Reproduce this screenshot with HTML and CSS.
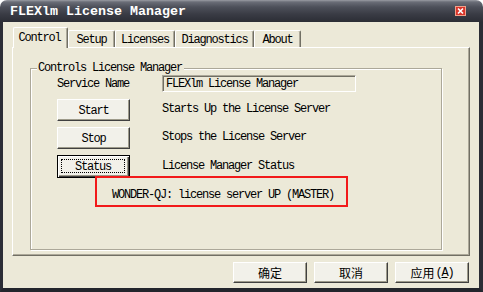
FILE: index.html
```html
<!DOCTYPE html>
<html>
<head>
<meta charset="utf-8">
<link rel="stylesheet" href="styles.css">
</head>
<body>
<div class="window">
  <div class="titlebar">
    <span class="title">FLEXlm License Manager</span>
    <span class="close">
      <svg width="11" height="10" viewBox="0 0 11 10">
        <rect x="0.5" y="0.5" width="10" height="9" fill="#d8342a" stroke="#f2a08a"/>
        <path d="M3 2.5 L8 7.5 M8 2.5 L3 7.5" stroke="#fff" stroke-width="1.6"/>
      </svg>
    </span>
  </div>
  <div class="frame">
    <div class="tabs">
      <div class="tab active t-control">Control</div>
      <div class="tab t-setup">Setup</div>
      <div class="tab t-lic">Licenses</div>
      <div class="tab t-diag">Diagnostics</div>
      <div class="tab t-about">About</div>
    </div>
    <div class="panel">
      <div class="group">
        <span class="group-label">Controls License Manager</span>
        <div class="row row-svc">
          <span class="lbl">Service Name</span>
          <div class="field">FLEXlm License Manager</div>
        </div>
        <div class="row row-btn row-start">
          <div class="btn">Start</div>
          <span class="desc">Starts Up the License Server</span>
        </div>
        <div class="row row-btn row-stop">
          <div class="btn">Stop</div>
          <span class="desc">Stops the License Server</span>
        </div>
        <div class="row row-btn row-status">
          <div class="btn btn-default"><span class="focus">Status</span></div>
          <span class="desc">License Manager Status</span>
        </div>
        <div class="status-text">WONDER-QJ: license server UP (MASTER)</div>
        <div class="redbox"></div>
      </div>
    </div>
    <div class="actions">
      <div class="btn btn-cn">确定</div>
      <div class="btn btn-cn">取消</div>
      <div class="btn btn-cn">应用<span class="acc">(<u>A</u>)</span></div>
    </div>
  </div>
</div>
</body>
</html>
```
FILE: styles.css
```css
html, body {
  margin: 0;
  padding: 0;
  background: #ffffff;
}
.window {
  width: 483px;
  height: 292px;
  font-family: "Liberation Mono", "DejaVu Sans Mono", monospace;
  font-size: 12px;
  letter-spacing: -1.2px;
  color: #000;
}
.titlebar {
  height: 22px;
  box-sizing: border-box;
  border-radius: 7px 7px 0 0;
  background: linear-gradient(#9a9ca4 0px, #6a6d77 2px, #4d505a 7px, #3a3c45 14px, #2b2d35 22px);
  display: flex;
  align-items: center;
  padding: 0 0 0 10px;
}
.title {
  color: #fff;
  font-weight: bold;
  font-size: 13.33px;
  letter-spacing: 0;
  flex: 1;
  padding-top: 1px;
}
.close {
  width: 11px;
  height: 10px;
  margin-right: 17px;
  display: flex;
}
.frame {
  height: 270px;
  box-sizing: border-box;
  background: #ece9d8;
  border-left: 3px solid #2b2d35;
  border-right: 4px solid #2b2d35;
  border-bottom: 4px solid #23252c;
  display: flex;
  flex-direction: column;
}
.tabs {
  display: flex;
  align-items: flex-start;
  height: 20px;
  padding: 5px 0 0 10px;
  position: relative;
  z-index: 2;
}
.tab {
  box-sizing: border-box;
  height: 17px;
  margin-top: 3px;
  border-top: 1px solid #fff;
  border-left: 1px solid #fff;
  border-right: 1px solid #716f64;
  box-shadow: inset -1px 0 0 #aca899;
  border-radius: 2px 2px 0 0;
  text-align: center;
  line-height: 18px;
  background: #ece9d8;
}
.tab.active {
  height: 21px;
  margin-top: 0;
  line-height: 20px;
  padding-right: 2px;
}
.t-control { width: 55px; }
.t-setup { width: 47px; }
.t-lic { width: 60px; }
.t-diag { width: 79px; }
.t-about { width: 47px; }
.panel {
  margin-left: 9px;
  width: 458px;
  height: 209px;
  box-sizing: border-box;
  border-top: 1px solid #fff;
  border-left: 1px solid #fff;
  border-right: 1px solid #716f64;
  border-bottom: 1px solid #716f64;
  box-shadow: inset -1px -1px 0 #aca899;
  padding: 20px 0 0 17px;
}
.group {
  position: relative;
  width: 412px;
  height: 182px;
  box-sizing: border-box;
  border: 1px solid #aca899;
  box-shadow: inset 1px 1px 0 #fff, 1px 1px 0 #fff;
  padding: 6px 0 0 26px;
}
.group-label {
  position: absolute;
  left: 6px;
  top: -8px;
  line-height: 14px;
  background: #ece9d8;
  padding: 0 2px 0 1px;
}
.row {
  display: flex;
  align-items: center;
}
.row-svc {
  height: 17px;
}
.lbl {
  width: 105px;
  padding-top: 1px;
  margin-top: -1px;
}
.field {
  width: 194px;
  height: 17px;
  box-sizing: border-box;
  border-top: 1px solid #aca899;
  border-left: 1px solid #aca899;
  border-right: 1px solid #fff;
  border-bottom: 1px solid #fff;
  box-shadow: inset 1px 1px 0 #716f64;
  padding: 2px 0 0 3px;
  line-height: 13px;
  white-space: nowrap;
}
.row-btn .btn {
  width: 73px;
  height: 22px;
}
.row-start { margin-top: 7px; }
.row-stop { margin-top: 6px; }
.row-status { margin-top: 6px; }
.row-status .btn { height: 23px; }
.desc {
  margin-left: 32px;
  margin-top: -2px;
}
.btn {
  box-sizing: border-box;
  display: flex;
  align-items: center;
  justify-content: center;
  background: #f2f1ea;
  border-top: 1px solid #fff;
  border-left: 1px solid #fff;
  border-right: 1px solid #404040;
  border-bottom: 1px solid #404040;
  box-shadow: inset -1px -1px 0 #9d9a8a;
  padding-top: 1px;
}
.btn-default {
  border: 1px solid #000;
  box-shadow: inset 1px 1px 0 #fff, inset -1px -1px 0 #404040, inset -2px -2px 0 #9d9a8a;
  padding: 3px 4px 4px 3px;
}
.focus {
  flex: 1;
  align-self: stretch;
  border: 1px dotted #000;
  display: flex;
  align-items: center;
  justify-content: center;
  line-height: 12px;
  padding-top: 1px;
}
.status-text {
  margin: 11px 0 0 55px;
  line-height: 12px;
}
.redbox {
  position: absolute;
  left: 64px;
  top: 107px;
  width: 253px;
  height: 31px;
  box-sizing: border-box;
  border: 2px solid #f21a1a;
}
.actions {
  display: flex;
  justify-content: flex-end;
  gap: 7px;
  margin: 6px 10px 0 0;
}
.btn-cn {
  width: 74px;
  height: 21px;
  font-family: "Noto Sans CJK SC", "Liberation Mono", sans-serif;
  font-size: 12px;
  letter-spacing: 0;
  line-height: 14px;
}
.acc {
  font-family: "Liberation Mono", monospace;
  letter-spacing: -1.2px;
  margin-left: 1px;
}
```
